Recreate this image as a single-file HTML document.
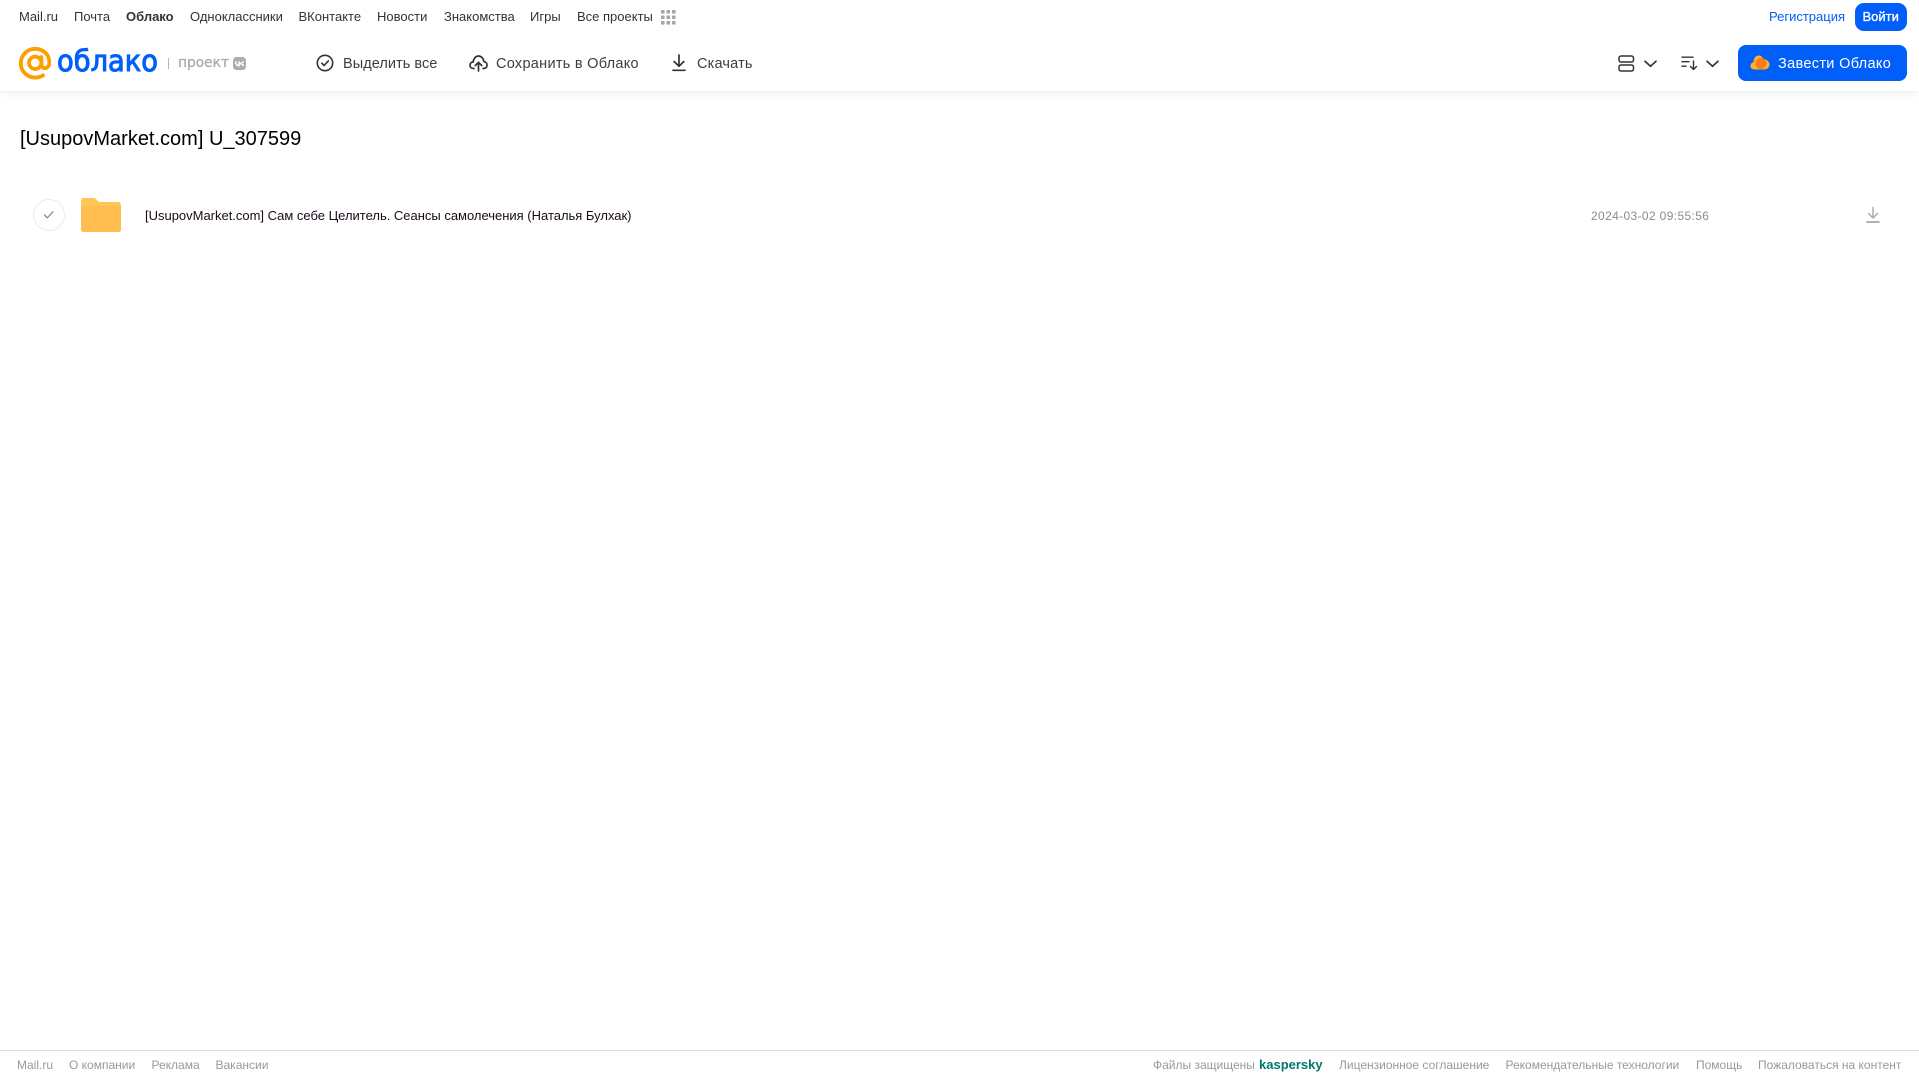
<!DOCTYPE html>
<html lang="ru"><head><meta charset="utf-8"><title>Облако</title>
<style>
html,body{margin:0;padding:0;background:#fff;width:1919px;height:1079px;overflow:hidden}
body{position:relative;font-family:"Liberation Sans",Arial,sans-serif}
.t{position:absolute;white-space:nowrap;line-height:18px;text-decoration:none}
.n{top:8px;font-size:13px;color:#333}
.b{top:54.500px;font-size:14.500px;color:#3d3d3d;letter-spacing:.3px}
.f{top:1056px;font-size:12px;color:#999}
svg{position:absolute;overflow:visible}
#hd{position:absolute;left:0;top:0;width:1919px;height:91px;background:#fff;box-shadow:0 1px 8px rgba(0,0,0,.09)}
</style></head><body>
<div id="hd"></div>

<a class="t n" style="left:19px">Mail.ru</a>
<a class="t n" style="left:74px">Почта</a>
<a class="t n" style="left:126px;font-weight:bold">Облако</a>
<a class="t n" style="left:190px">Одноклассники</a>
<a class="t n" style="left:298.500px">ВКонтакте</a>
<a class="t n" style="left:377px">Новости</a>
<a class="t n" style="left:444px">Знакомства</a>
<a class="t n" style="left:530px">Игры</a>
<a class="t n" style="left:577px">Все проекты</a>
<svg style="left:661px;top:10px" width="15" height="15" fill="#a6a6a6"><rect x="0" y="0" width="3.600" height="3.600" rx=".8"/><rect x="5.500" y="0" width="3.600" height="3.600" rx=".8"/><rect x="11" y="0" width="3.600" height="3.600" rx=".8"/><rect x="0" y="5.500" width="3.600" height="3.600" rx=".8"/><rect x="5.500" y="5.500" width="3.600" height="3.600" rx=".8"/><rect x="11" y="5.500" width="3.600" height="3.600" rx=".8"/><rect x="0" y="11" width="3.600" height="3.600" rx=".8"/><rect x="5.500" y="11" width="3.600" height="3.600" rx=".8"/><rect x="11" y="11" width="3.600" height="3.600" rx=".8"/></svg>

<a class="t n" style="left:1769px;color:#005ff9">Регистрация</a>
<div style="position:absolute;left:1855px;top:3px;width:52px;height:28px;background:#005ff9;border-radius:9px"></div>
<a class="t n" style="left:1862.500px;color:#fff;-webkit-text-stroke:.35px #fff">Войти</a>

<!-- logo -->
<svg style="left:19px;top:47px" width="33" height="33" viewBox="0 0 33 33" fill="none"><circle cx="16.200" cy="15.800" r="6.200" stroke="#ff9e00" stroke-width="3.800"/><path d="M22.400 10v7.600c0 5 7.600 5 7.900-1.600C30.700 7.500 24 1.800 16.200 1.800 8.200 1.800 1.800 8.200 1.800 16.200c0 8 6.400 14.400 14.400 14.400 3 0 5.500-.7 7.800-2.200" stroke="#ff9e00" stroke-width="3.800" stroke-linecap="round"/></svg>
<svg style="left:57px;top:40px" width="104" height="44"><text x="0" y="31" font-family="'DejaVu Sans',sans-serif" font-size="29" fill="#005ff9" stroke="#005ff9" stroke-width="1" textLength="101" lengthAdjust="spacingAndGlyphs">облако</text></svg>
<div style="position:absolute;left:168px;top:58px;width:1px;height:11px;background:#b5b5b5"></div>
<svg style="left:178px;top:50px" width="52" height="24"><text x="0" y="17" font-family="'DejaVu Sans',sans-serif" font-size="14.500" fill="#adadad" stroke="#adadad" stroke-width=".35" textLength="51" lengthAdjust="spacingAndGlyphs">проект</text></svg>
<div style="position:absolute;left:233px;top:57px;width:13px;height:13px;background:#adadad;border-radius:3.500px"></div>
<svg style="left:233px;top:57px" width="13" height="13" fill="none" stroke="#fff" stroke-width="1.500"><path d="M2.500 4.300c.3 3 1.600 4.500 3.500 4.500V4.300M10.500 4.300C10 5.800 8.800 6.500 6 6.500c2.800 0 4 1 4.700 2.500"/></svg>

<!-- toolbar -->
<svg style="left:316px;top:54px" width="18" height="18" fill="none" stroke="#333" stroke-width="1.600"><circle cx="9" cy="9" r="7.700"/><path d="M5.800 9.200l2.300 2.300 4.200-4.600" stroke-linecap="round" stroke-linejoin="round"/></svg>
<span class="t b" style="left:343px;letter-spacing:.05px">Выделить все</span>
<svg style="left:469px;top:54px" width="19" height="18" fill="none" stroke="#333" stroke-width="1.700" stroke-linecap="round" stroke-linejoin="round"><path d="M5 14.500H4.500C2.300 14.500 1 13 1 11.200 1 9.300 2.400 8 4.200 8c.3-3.500 2.600-6 5.300-6s5 2.300 5.300 5.500c2 .2 3.200 1.800 3.200 3.600 0 2-1.400 3.400-3.500 3.400H14"/><path d="M9.500 17V8.500M6.300 11.500l3.200-3.200 3.200 3.200"/></svg>
<span class="t b" style="left:496px;letter-spacing:.28px">Сохранить в Облако</span>
<svg style="left:671px;top:54px" width="16" height="18" fill="none" stroke="#333" stroke-width="1.700" stroke-linecap="round" stroke-linejoin="round"><path d="M8 1v11M3.200 7.500L8 12.300l4.800-4.800"/><path d="M2 16.300h12"/></svg>
<span class="t b" style="left:697px;letter-spacing:.18px">Скачать</span>

<!-- right controls -->
<svg style="left:1618px;top:55px" width="17" height="17" fill="none" stroke="#333" stroke-width="1.500"><rect x="1" y="1" width="14.500" height="6" rx="2"/><rect x="1" y="10" width="14.500" height="6" rx="2"/></svg>
<svg style="left:1643.500px;top:60px" width="13" height="8" fill="none" stroke="#333" stroke-width="1.700" stroke-linecap="round" stroke-linejoin="round"><path d="M1 1.300l5.500 5 5.500-5"/></svg>
<svg style="left:1681px;top:56px" width="17" height="15" fill="none" stroke="#333" stroke-width="1.400" stroke-linecap="round" stroke-linejoin="round"><path d="M1 1.200h11M1 5.700h7M1 10.200h4M12.500 5v8.500M9.500 10.500l3 3 3-3"/></svg>
<svg style="left:1705.500px;top:60px" width="13" height="8" fill="none" stroke="#333" stroke-width="1.700" stroke-linecap="round" stroke-linejoin="round"><path d="M1 1.300l5.500 5 5.500-5"/></svg>
<div style="position:absolute;left:1738px;top:45px;width:169px;height:36px;background:#005ff9;border-radius:8px"></div>
<svg style="left:1750px;top:54px" width="20" height="17"><path d="M5 15.500C1.500 15.500 0 13.500 .6 11 1 9 2.500 8.500 3.500 8.200 3.700 4 6 1.500 8.500 1.500c2.500 0 4 1.500 4.500 3.500 3.500 0 6.500 2.500 6.500 5.500 0 3-2.500 5-5.500 5z" fill="#ffb02e"/><circle cx="11" cy="9.500" r="5.500" fill="#ff7a1a"/></svg>
<span class="t b" style="left:1778px;color:#fff;letter-spacing:.33px">Завести Облако</span>

<!-- title -->
<div class="t" style="left:20px;top:126px;font-size:20px;line-height:26px;color:#000">[UsupovMarket.com] U_307599</div>

<!-- row -->
<div style="position:absolute;left:33px;top:199px;width:30px;height:30px;border:1px solid #ececec;border-radius:50%"></div>
<svg style="left:43px;top:210px" width="12" height="10" fill="none" stroke="#8c8c8c" stroke-width="1.300" stroke-linecap="round" stroke-linejoin="round"><path d="M1.500 5l2.800 2.800L10 1.800"/></svg>
<svg style="left:81px;top:198px" width="40" height="34"><path d="M0 3a3 3 0 0 1 3-3h9c2 0 3 .8 4 2s2 2 3.500 2H37a3 3 0 0 1 3 3v24a3 3 0 0 1-3 3H3a3 3 0 0 1-3-3z" fill="#ffc655"/><rect x="0" y="8" width="40" height="26" rx="2.500" fill="#ffbe4f"/></svg>
<div class="t" style="left:145px;top:207px;font-size:13px;color:#1a0a1a;letter-spacing:-.01px">[UsupovMarket.com] Сам себе Целитель. Сеансы самолечения (Наталья Булхак)</div>
<div class="t" style="left:1591px;top:207px;font-size:12px;color:#8c8c8c;letter-spacing:.36px">2024-03-02 09:55:56</div>
<svg style="left:1866px;top:206px" width="15" height="18" fill="none" stroke="#a8a8a8" stroke-width="1.400" stroke-linecap="round" stroke-linejoin="round"><path d="M7 1.500v10M2.500 7.500L7 12l4.500-4.500"/><path d="M1 16h12" stroke-width="1.800"/></svg>

<!-- footer -->
<div style="position:absolute;left:0;top:1050px;width:1919px;height:1px;background:#dcdcdc"></div>
<a class="t f" style="left:17px">Mail.ru</a>
<a class="t f" style="left:69px">О компании</a>
<a class="t f" style="left:151.500px">Реклама</a>
<a class="t f" style="left:215.500px">Вакансии</a>
<a class="t f" style="left:1153px">Файлы защищены</a>
<span class="t f" style="left:1259px;font-size:13px;font-weight:bold;color:#00786a;letter-spacing:0">kaspersky</span>
<a class="t f" style="left:1339px">Лицензионное соглашение</a>
<a class="t f" style="left:1505.500px">Рекомендательные технологии</a>
<a class="t f" style="left:1696px">Помощь</a>
<a class="t f" style="left:1758px">Пожаловаться на контент</a>
</body></html>
